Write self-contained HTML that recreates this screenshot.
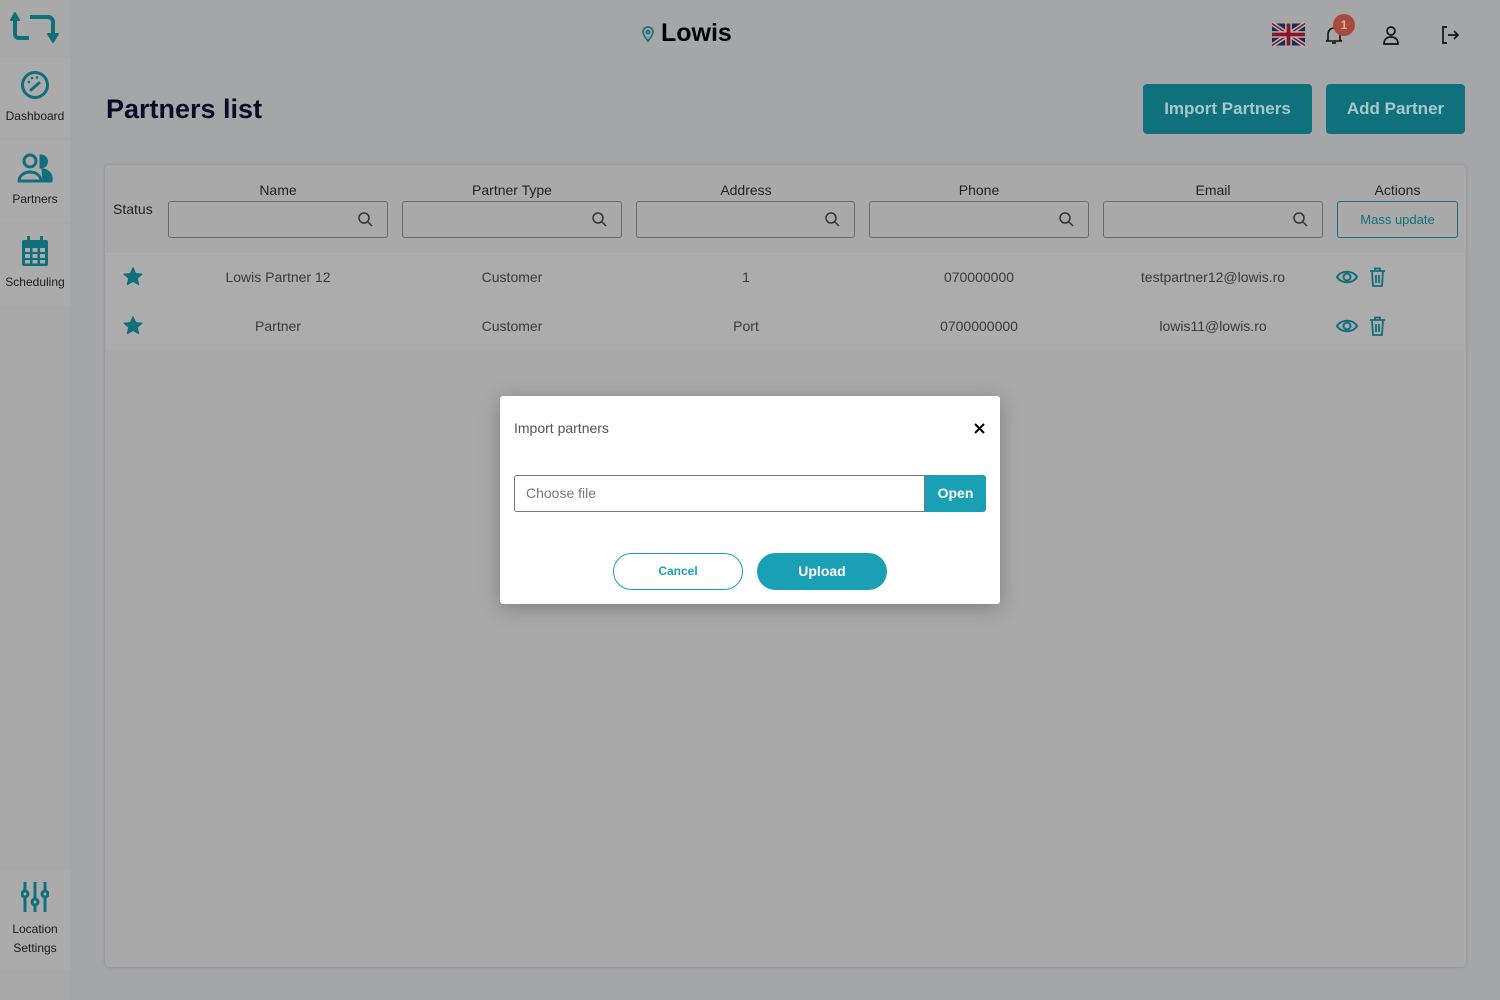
<!DOCTYPE html>
<html><head><meta charset="utf-8"><style>
*{box-sizing:border-box;margin:0;padding:0}
body{width:1500px;height:1000px;background:#a5a6a8;font-family:"Liberation Sans",sans-serif;position:relative;overflow:hidden;color:#2a2a2a}
.abs{position:absolute}
.side{left:0;top:0;width:70px;height:1000px;background:#a8a8a9}
.nav{left:0;width:70px;background:#ababab;text-align:center;font-size:12px;color:#1a1a1a}
.card{left:105px;top:165px;width:1361px;height:802px;background:#a9a9a9;border-radius:4px;box-shadow:0 0 3px rgba(0,0,0,.15)}
.hdr{font-size:14px;color:#222;text-align:center;width:220px}
.filt{height:37px;width:220px;border:1px solid #6a6a6a;border-radius:3px}
.filt svg{position:absolute;right:14px;top:10px}
.cell{font-size:14px;color:#3a3a3a;text-align:center;width:220px}
.btn{background:#10707c;color:#a9c7cb;font-size:17px;font-weight:bold;border-radius:4px;text-align:center;line-height:50px;height:50px}
</style></head><body>
<div class="abs side"></div>
<div class="abs" style="left:0;top:0;width:70px;height:55px;background:#a9a9aa"></div>
<svg class="abs" style="left:10px;top:11px" width="50" height="34" viewBox="0 0 50 34" fill="none" stroke="#106f7b" stroke-width="4" stroke-linejoin="round"><path d="M5 7v16a4 4 0 0 0 4 4h10"/><path d="M1 9l4-7 4 7z" fill="#106f7b" stroke-width="2"/><path d="M20 6h18a5 5 0 0 1 5 5v12"/><path d="M38 23l5 8 5-8z" fill="#106f7b" stroke-width="2"/></svg>

<div class="abs nav" style="top:57px;height:80px"><svg style="margin-top:13px" width="30" height="30" viewBox="0 0 30 30" fill="none" stroke="#106f7b" stroke-width="3"><circle cx="15" cy="15" r="12.5"/><path d="M11 20l8-7" stroke-linecap="round"/><circle cx="9" cy="12" r="1.3" fill="#106f7b" stroke="none"/><circle cx="12" cy="8" r="1.3" fill="#106f7b" stroke="none"/><circle cx="17" cy="7.5" r="1.3" fill="#106f7b" stroke="none"/></svg><div style="margin-top:6px">Dashboard</div></div>
<div class="abs nav" style="top:140px;height:82px"><svg style="margin-top:13px" width="36" height="30" viewBox="0 0 36 30" fill="none" stroke="#106f7b" stroke-width="3"><circle cx="13" cy="8" r="6"/><path d="M2 28a11 9 0 0 1 22 0z"/><path d="M24 3a5 5 0 0 1 0 11z" fill="#106f7b"/><path d="M26 17a9 9 0 0 1 8 11h-7z" fill="#106f7b"/></svg><div style="margin-top:6px">Partners</div></div>
<div class="abs nav" style="top:224px;height:82px"><svg style="margin-top:12px" width="26" height="30" viewBox="0 0 26 30" fill="#106f7b"><rect x="0" y="4" width="26" height="26" rx="2"/><rect x="5" y="0" width="3" height="7"/><rect x="18" y="0" width="3" height="7"/><g fill="#ababab"><rect x="3" y="12" width="5" height="4"/><rect x="10.5" y="12" width="5" height="4"/><rect x="18" y="12" width="5" height="4"/><rect x="3" y="18" width="5" height="4"/><rect x="10.5" y="18" width="5" height="4"/><rect x="18" y="18" width="5" height="4"/><rect x="3" y="24" width="5" height="3.5"/><rect x="10.5" y="24" width="5" height="3.5"/><rect x="18" y="24" width="5" height="3.5"/></g></svg><div style="margin-top:6px">Scheduling</div></div>
<div class="abs nav" style="top:870px;height:100px"><svg style="margin-top:12px" width="28" height="30" viewBox="0 0 28 30" fill="none" stroke="#106f7b" stroke-width="3"><path d="M4 0v30M14 0v30M24 0v30"/><circle cx="4" cy="12" r="3" fill="#ababab"/><circle cx="14" cy="20" r="3" fill="#ababab"/><circle cx="24" cy="12" r="3" fill="#ababab"/></svg><div style="margin-top:5px;line-height:19px">Location<br>Settings</div></div>

<svg class="abs" style="left:642px;top:26px" width="12" height="16" viewBox="0 0 12 16" fill="none" stroke="#106f7b" stroke-width="1.6"><path d="M6 15C2 10 1 8 1 6a5 5 0 0 1 10 0c0 2-1 4-5 9z"/><circle cx="6" cy="6" r="1.6"/></svg>
<div class="abs" style="left:661px;top:19px;font-size:25px;font-weight:bold;color:#000">Lowis</div>

<svg class="abs" style="left:1272px;top:22px" width="33" height="25" viewBox="0 0 60 40"><rect width="60" height="40" fill="#1a2a5a"/><path d="M0 0L60 40M60 0L0 40" stroke="#bbb" stroke-width="8"/><path d="M0 0L60 40M60 0L0 40" stroke="#8a1428" stroke-width="3"/><path d="M30 0v40M0 20h60" stroke="#bbb" stroke-width="12"/><path d="M30 0v40M0 20h60" stroke="#8a1428" stroke-width="7"/></svg>
<svg class="abs" style="left:1324px;top:25px" width="20" height="20" viewBox="0 0 20 20" fill="none" stroke="#111" stroke-width="1.6"><path d="M4 15V9a6 6 0 0 1 12 0v6l2 1H2z"/><path d="M8 18h4"/></svg>
<div class="abs" style="left:1333px;top:14px;width:22px;height:22px;border-radius:50%;background:#a8493e;color:#d7b2aa;font-size:12px;font-weight:bold;text-align:center;line-height:22px">1</div>
<svg class="abs" style="left:1382px;top:25px" width="18" height="20" viewBox="0 0 18 20" fill="none" stroke="#111" stroke-width="1.7"><circle cx="9" cy="6" r="4"/><path d="M2 19c0-5 3-7 7-7s7 2 7 7z"/></svg>
<svg class="abs" style="left:1440px;top:25px" width="20" height="20" viewBox="0 0 20 20" fill="none" stroke="#111" stroke-width="1.7"><path d="M7 2H3v16h4M8 10h10M14 6l4 4-4 4"/></svg>

<div class="abs" style="left:106px;top:94px;font-size:27px;font-weight:bold;color:#0a0a2a">Partners list</div>
<div class="abs btn" style="left:1143px;top:84px;width:169px">Import Partners</div>
<div class="abs btn" style="left:1326px;top:84px;width:139px">Add Partner</div>

<div class="abs card"></div>
<div class="abs" style="left:106px;top:253px;width:1359px;height:97px;background:#acacac;border-top:1px solid #b0b0b0"></div>
<div class="abs" style="left:113px;top:201px;font-size:14px;color:#222">Status</div>
<svg width="0" height="0" style="position:absolute"><defs><g id="mag" fill="none" stroke="#333" stroke-width="1.5"><circle cx="6" cy="6" r="5"/><path d="M10 10l4 4"/></g></defs></svg>

<div class="abs hdr" style="left:168px;top:182px">Name</div>
<div class="abs hdr" style="left:402px;top:182px">Partner Type</div>
<div class="abs hdr" style="left:636px;top:182px">Address</div>
<div class="abs hdr" style="left:869px;top:182px">Phone</div>
<div class="abs hdr" style="left:1103px;top:182px">Email</div>
<div class="abs hdr" style="left:1337px;top:182px;width:121px">Actions</div>

<div class="abs filt" style="left:168px;top:201px"><svg width="15" height="15"><use href="#mag"/></svg></div>
<div class="abs filt" style="left:402px;top:201px"><svg width="15" height="15"><use href="#mag"/></svg></div>
<div class="abs filt" style="left:636px;top:201px;width:219px"><svg width="15" height="15"><use href="#mag"/></svg></div>
<div class="abs filt" style="left:869px;top:201px"><svg width="15" height="15"><use href="#mag"/></svg></div>
<div class="abs filt" style="left:1103px;top:201px"><svg width="15" height="15"><use href="#mag"/></svg></div>
<div class="abs" style="left:1337px;top:201px;width:121px;height:37px;border:1px solid #106f7b;border-radius:3px;color:#106f7b;font-size:13px;text-align:center;line-height:35px">Mass update</div>

<svg class="abs" style="left:123px;top:267px" width="20" height="19" viewBox="0 0 24 23"><path d="M12 1l3.2 7 7.6.7-5.8 5 1.8 7.5L12 17.3 5.2 21.2 7 13.7 1.2 8.7l7.6-.7z" fill="#106f7b" stroke="#106f7b" stroke-linejoin="round" stroke-width="1.5"/></svg>
<svg class="abs" style="left:123px;top:316px" width="20" height="19" viewBox="0 0 24 23"><path d="M12 1l3.2 7 7.6.7-5.8 5 1.8 7.5L12 17.3 5.2 21.2 7 13.7 1.2 8.7l7.6-.7z" fill="#106f7b" stroke="#106f7b" stroke-linejoin="round" stroke-width="1.5"/></svg>
<div class="abs cell" style="left:168px;top:269px">Lowis Partner 12</div>
<div class="abs cell" style="left:402px;top:269px">Customer</div>
<div class="abs cell" style="left:636px;top:269px">1</div>
<div class="abs cell" style="left:869px;top:269px">070000000</div>
<div class="abs cell" style="left:1103px;top:269px">testpartner12@lowis.ro</div>
<div class="abs cell" style="left:168px;top:318px">Partner</div>
<div class="abs cell" style="left:402px;top:318px">Customer</div>
<div class="abs cell" style="left:636px;top:318px">Port</div>
<div class="abs cell" style="left:869px;top:318px">0700000000</div>
<div class="abs cell" style="left:1103px;top:318px">lowis11@lowis.ro</div>

<svg class="abs" style="left:1336px;top:269px" width="22" height="16" viewBox="0 0 22 16" fill="none" stroke="#106f7b" stroke-width="2"><path d="M1 8C5 1 17 1 21 8C17 15 5 15 1 8z"/><circle cx="11" cy="8" r="3.5"/></svg>
<svg class="abs" style="left:1369px;top:267px" width="17" height="20" viewBox="0 0 17 20" fill="none" stroke="#106f7b" stroke-width="1.8"><path d="M1 4h15M6 4V1.5h5V4M3 4l1 15h9l1-15M7 8v8M10 8v8"/></svg>
<svg class="abs" style="left:1336px;top:318px" width="22" height="16" viewBox="0 0 22 16" fill="none" stroke="#106f7b" stroke-width="2"><path d="M1 8C5 1 17 1 21 8C17 15 5 15 1 8z"/><circle cx="11" cy="8" r="3.5"/></svg>
<svg class="abs" style="left:1369px;top:316px" width="17" height="20" viewBox="0 0 17 20" fill="none" stroke="#106f7b" stroke-width="1.8"><path d="M1 4h15M6 4V1.5h5V4M3 4l1 15h9l1-15M7 8v8M10 8v8"/></svg>

<div class="abs" style="left:500px;top:396px;width:500px;height:208px;background:#fff;border-radius:3px;box-shadow:0 4px 20px rgba(0,0,0,.25)">
 <div class="abs" style="left:14px;top:24px;font-size:14px;color:#555">Import partners</div>
 <svg class="abs" style="left:474px;top:27px" width="11" height="11" viewBox="0 0 11 11" stroke="#000" stroke-width="2"><path d="M1 1l9 9M10 1l-9 9"/></svg>
 <div class="abs" style="left:14px;top:79px;width:411px;height:37px;border:1px solid #757a80;border-radius:3px 0 0 3px;font-size:14px;color:#7a7a7a;line-height:35px;padding-left:11px">Choose file</div>
 <div class="abs" style="left:425px;top:79px;width:61px;height:37px;background:#19a0b5;border-radius:0 3px 3px 0;color:#fff;font-size:14px;font-weight:bold;text-align:center;line-height:37px">Open</div>
 <div class="abs" style="left:113px;top:157px;width:130px;height:37px;border:1px solid #19a0b5;border-radius:19px;color:#19a0b5;font-size:12px;font-weight:bold;text-align:center;line-height:35px">Cancel</div>
 <div class="abs" style="left:257px;top:157px;width:130px;height:37px;background:#19a0b5;border-radius:19px;color:#fff;font-size:14px;font-weight:bold;text-align:center;line-height:37px">Upload</div>
</div>
</body></html>
